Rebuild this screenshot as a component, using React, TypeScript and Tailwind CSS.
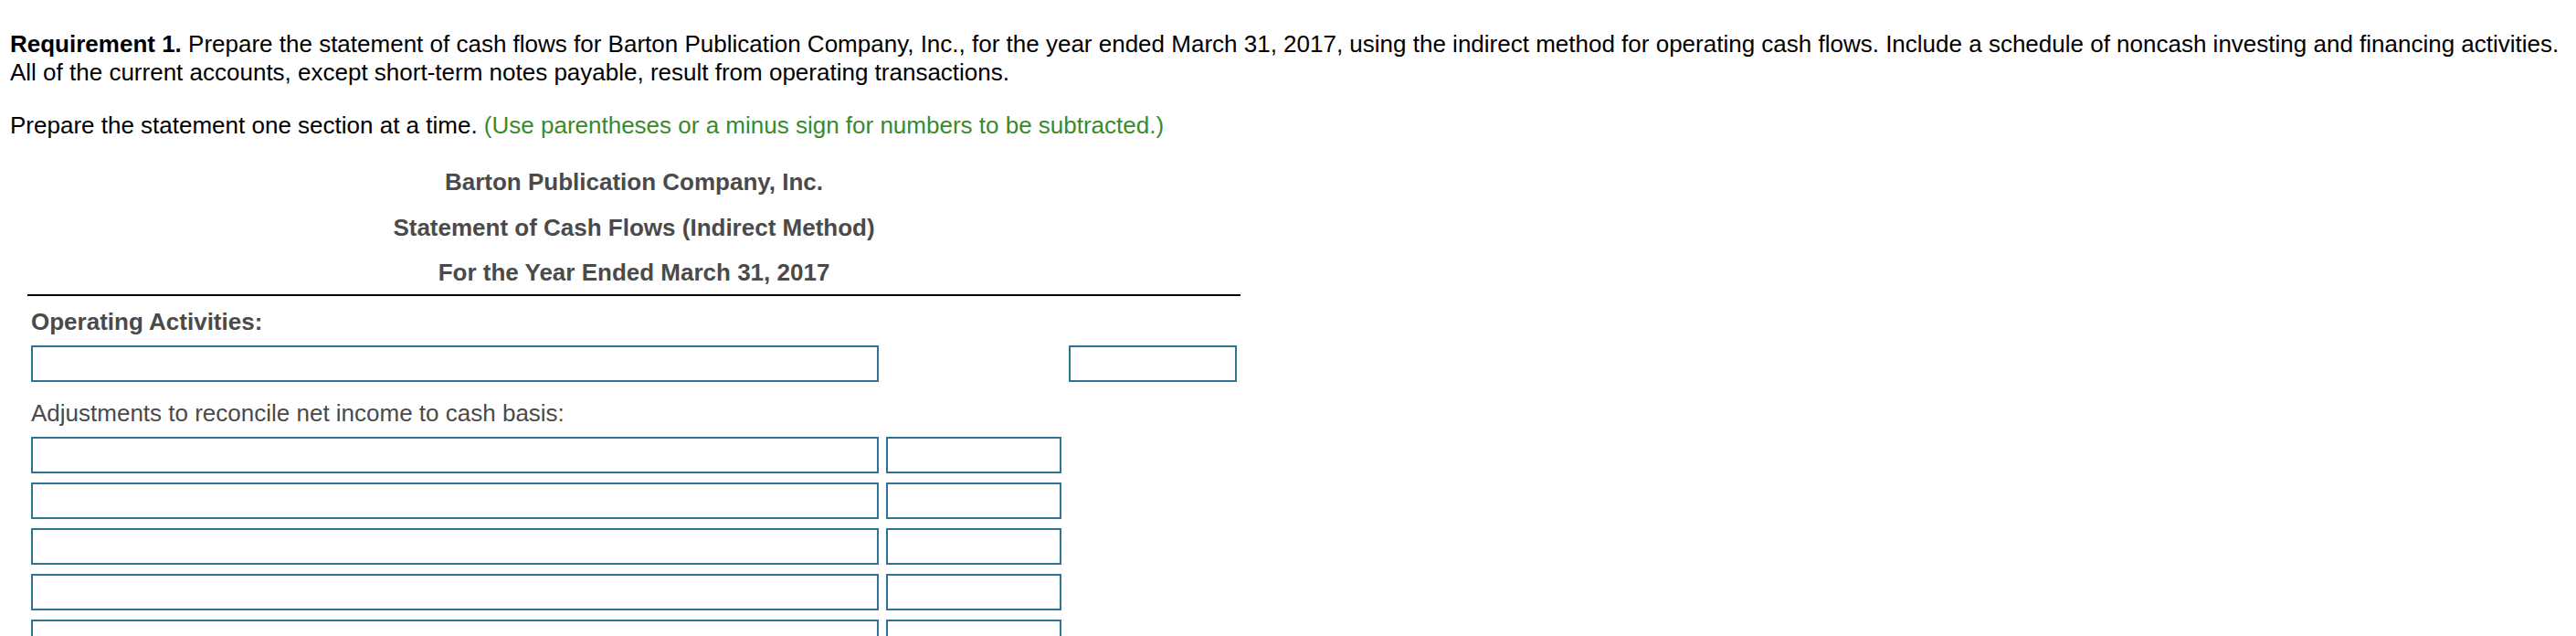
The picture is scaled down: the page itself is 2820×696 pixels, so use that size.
const rows = [0, 1, 2, 3, 4];

function Box({ className = '' }: { className?: string }) {
  return <div className={`h-[40px] border-2 border-[#2f7494] bg-white ${className}`} />;
}

export default function App() {
  return (
    <main className="min-h-screen bg-white px-[11px] pt-[33px] font-['Liberation_Sans',Arial,sans-serif] text-[26px] leading-[31px] text-black">
      <p>
        <span className="whitespace-nowrap">
          <b>Requirement 1.</b> Prepare the statement of cash flows for Barton Publication Company, Inc., for the
          year ended March 31, 2017, using the indirect method for operating cash flows. Include a schedule of
          noncash investing and financing activities.
        </span>
        <br />
        All of the current accounts, except short-term notes payable, result from operating transactions.
      </p>

      <p className="mt-[27px]">
        Prepare the statement one section at a time.{' '}
        <span className="text-[#3a8a2b]">(Use parentheses or a minus sign for numbers to be subtracted.)</span>
      </p>

      <section className="ml-[19px] mt-[21px] w-[1328px]">
        <div className="text-center font-bold text-[#4a4a4a]">
          <div className="leading-[50px]">Barton Publication Company, Inc.</div>
          <div className="leading-[51px]">Statement of Cash Flows (Indirect Method)</div>
          <div className="border-b-2 border-black leading-[47px]">For the Year Ended March 31, 2017</div>
        </div>

        <div className="px-[4px] pt-[12px]">
          <h3 className="font-bold leading-[32px] text-[#4a4a4a]">Operating Activities:</h3>
          <div className="mt-[10px] grid grid-cols-[928px_192px_184px] gap-x-[8px]">
            <Box />
            <div />
            <Box />
          </div>

          <p className="mt-[18px] leading-[32px] text-[#4a4a4a]">Adjustments to reconcile net income to cash basis:</p>
          <div className="mt-[10px] grid grid-cols-[928px_192px_184px] gap-x-[8px] gap-y-[10px]">
            {rows.map((r) => (
              <div key={r} className="contents">
                <Box />
                <Box />
                <div />
              </div>
            ))}
          </div>
        </div>
      </section>
    </main>
  );
}
